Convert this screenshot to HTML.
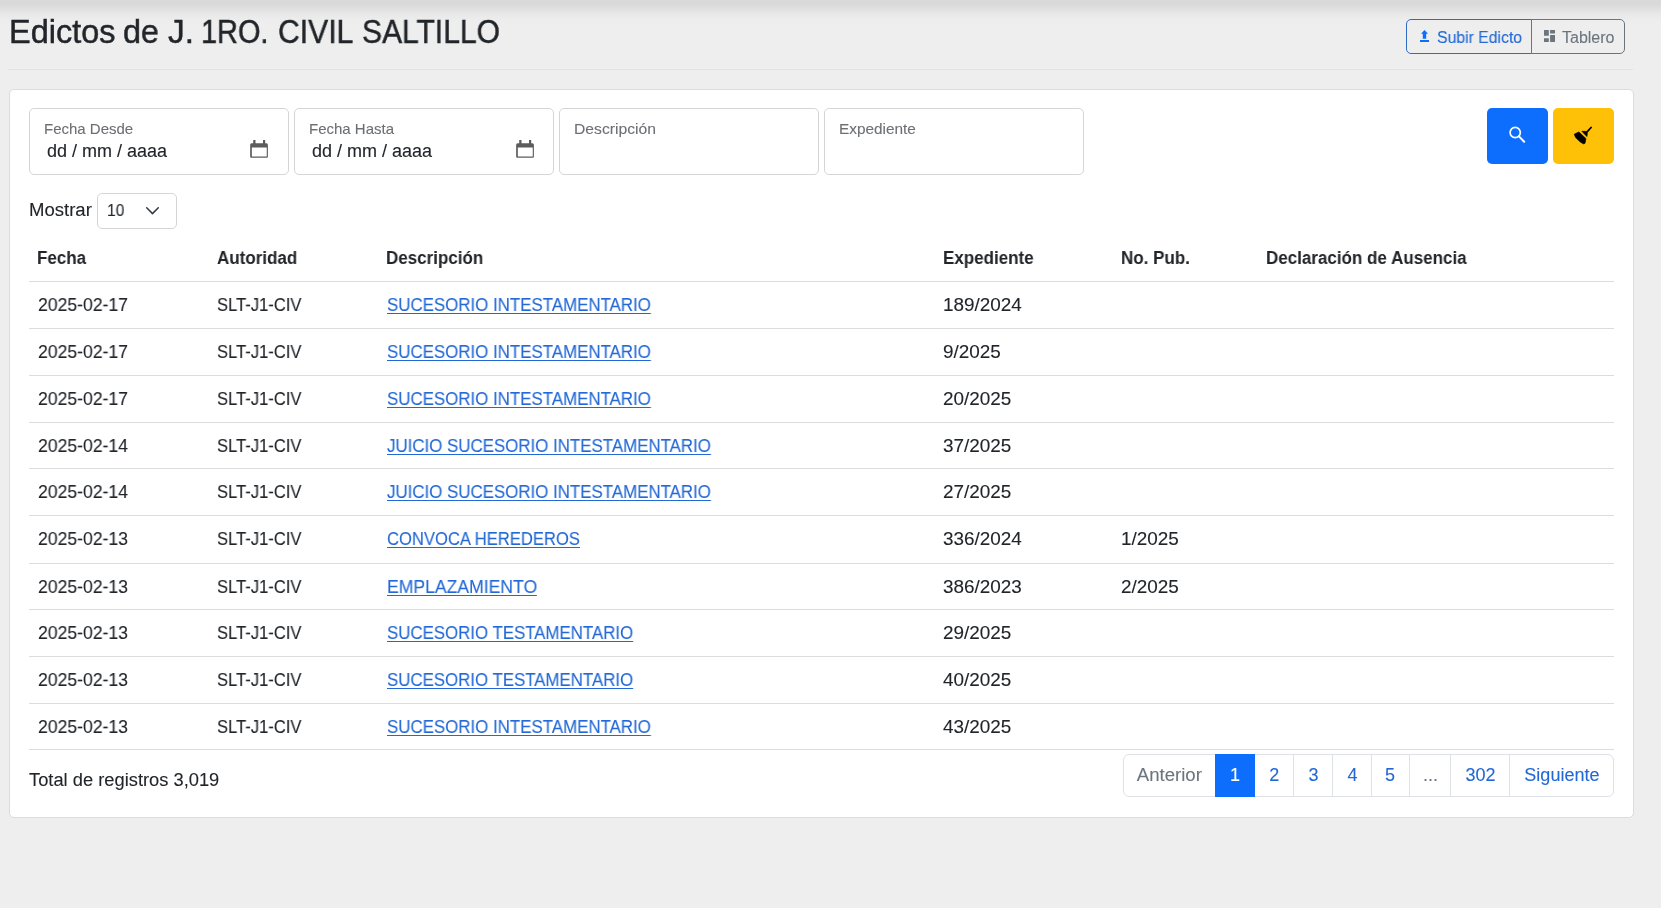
<!DOCTYPE html>
<html><head><meta charset="utf-8"><title>Edictos</title>
<style>
*{box-sizing:border-box;margin:0;padding:0}
html,body{width:1661px;height:908px;overflow:hidden}
body{position:relative;background:linear-gradient(#d9d9d9 0,#d9d9d9 4px,#e2e2e2 10px,#e8e8e8 14px,#ededed 20px,#eeeeee 24px) no-repeat,#eeeeee;font-family:"Liberation Sans",sans-serif;color:#212529}
.t{position:absolute;white-space:nowrap;line-height:1;transform-origin:0 0;-webkit-text-stroke:0.1px currentColor;will-change:transform}
.pc{text-align:center}
.abs,.ic{position:absolute}
.bg1{position:absolute;border:1px solid #2f6cc4;border-radius:5px 0 0 5px}
.bg2{position:absolute;border:1px solid #6c757d;border-radius:0 5px 5px 0}
.card{position:absolute;left:9px;top:89px;width:1625px;height:729px;background:#fff;border:1px solid #dcdcdc;border-radius:5px}
.inp{position:absolute;background:#fff;border:1px solid #d5d5d5;border-radius:5px}
.btnb{position:absolute;background:#0d6efd;border-radius:5px}
.btny{position:absolute;background:#ffc107;border-radius:5px}
.hl{position:absolute;left:29px;width:1585px;height:1px;background:#dcdcdc}
.pg{position:absolute;background:#fff;border:1px solid #dee2e6;border-radius:6px}
</style></head><body>
<div class="t" style="left:8.90px;top:16.49px;font-size:32.5px;font-weight:400;color:#212529;letter-spacing:0px;transform:scaleX(0.999);-webkit-text-stroke:0.45px #212529;">Edictos</div>
<div class="t" style="left:122.81px;top:16.49px;font-size:32.5px;font-weight:400;color:#212529;letter-spacing:0px;transform:scaleX(0.9941);-webkit-text-stroke:0.45px #212529;">de</div>
<div class="t" style="left:167.70px;top:16.49px;font-size:32.5px;font-weight:400;color:#212529;letter-spacing:0px;transform:scaleX(1.0261);-webkit-text-stroke:0.45px #212529;">J.</div>
<div class="t" style="left:201.32px;top:16.49px;font-size:32.5px;font-weight:400;color:#212529;letter-spacing:0px;transform:scaleX(0.8903);-webkit-text-stroke:0.45px #212529;">1RO.</div>
<div class="t" style="left:278.07px;top:16.49px;font-size:32.5px;font-weight:400;color:#212529;letter-spacing:0px;transform:scaleX(0.9263);-webkit-text-stroke:0.45px #212529;">CIVIL</div>
<div class="t" style="left:362.28px;top:16.49px;font-size:32.5px;font-weight:400;color:#212529;letter-spacing:0px;transform:scaleX(0.9245);-webkit-text-stroke:0.45px #212529;">SALTILLO</div>
<div class="bg1" style="left:1406px;top:19px;width:126px;height:35px"></div><div class="bg2" style="left:1531px;top:19px;width:94px;height:35px"></div><svg class="ic" style="left:1414px;top:26px" width="22" height="20" viewBox="0 0 22 20"><path fill="#0d6efd" d="M10.5 4L14 7.7H12.2V12.8H8.8V7.7H7Z M6 14.1H15V15.9H6Z"/></svg><div class="t" style="left:1437.00px;top:29.76px;font-size:16px;font-weight:400;color:#2268d6;letter-spacing:0px;transform:scaleX(0.986);">Subir Edicto</div>
<svg class="ic" style="left:1540px;top:26px" width="20" height="20" viewBox="0 0 20 20"><path fill="#6c757d" d="M4 4h4.8v5.8H4z M4 12.3h4.8v3.6H4z M10.1 4H15v3.6h-4.9z M10.1 9.1H15v6.8h-4.9z"/></svg><div class="t" style="left:1561.50px;top:29.76px;font-size:16px;font-weight:400;color:#6c757d;letter-spacing:0px;">Tablero</div>
<div class="abs" style="left:8px;top:68px;width:1625px;height:1px;background:#f1f1f1"></div><div class="abs" style="left:8px;top:69px;width:1625px;height:1px;background:#e1e1e1"></div><div class="card"></div><div class="inp" style="left:29px;top:108px;width:260px;height:67px"></div><div class="t" style="left:44.00px;top:121.20px;font-size:15px;font-weight:400;color:#6c6f73;letter-spacing:0px;">Fecha Desde</div>
<div class="t" style="left:47.00px;top:141.56px;font-size:18px;font-weight:400;color:#212529;letter-spacing:0px;">dd / mm / aaaa</div>
<svg class="ic" style="left:250px;top:140px" width="19" height="19" viewBox="0 0 19 19"><path fill="#5c5c5c" fill-rule="evenodd" d="M3.2 0h2.3v3.3H3.2z M13 0h2.2v3.3H13z M1.65 3.2h14.75a1.5 1.5 0 0 1 1.5 1.5v12.1a1 1 0 0 1-1 1H1.15a1 1 0 0 1-1-1V4.7a1.5 1.5 0 0 1 1.5-1.5z M1.85 7.5v9.1h14.9V7.5z"/></svg><div class="inp" style="left:293.5px;top:108px;width:260px;height:67px"></div><div class="t" style="left:308.50px;top:121.20px;font-size:15px;font-weight:400;color:#6c6f73;letter-spacing:0px;">Fecha Hasta</div>
<div class="t" style="left:311.50px;top:141.56px;font-size:18px;font-weight:400;color:#212529;letter-spacing:0px;">dd / mm / aaaa</div>
<svg class="ic" style="left:516px;top:140px" width="19" height="19" viewBox="0 0 19 19"><path fill="#5c5c5c" fill-rule="evenodd" d="M3.2 0h2.3v3.3H3.2z M13 0h2.2v3.3H13z M1.65 3.2h14.75a1.5 1.5 0 0 1 1.5 1.5v12.1a1 1 0 0 1-1 1H1.15a1 1 0 0 1-1-1V4.7a1.5 1.5 0 0 1 1.5-1.5z M1.85 7.5v9.1h14.9V7.5z"/></svg><div class="inp" style="left:559px;top:108px;width:260px;height:67px"></div><div class="t" style="left:574.00px;top:121.20px;font-size:15px;font-weight:400;color:#6c6f73;letter-spacing:0px;transform:scaleX(1.045);">Descripción</div>
<div class="inp" style="left:824px;top:108px;width:260px;height:67px"></div><div class="t" style="left:839.00px;top:121.20px;font-size:15px;font-weight:400;color:#6c6f73;letter-spacing:0px;transform:scaleX(1.024);">Expediente</div>
<div class="btnb" style="left:1487px;top:108px;width:61px;height:56px"></div><svg class="ic" style="left:1505px;top:122px" width="24" height="24" viewBox="0 0 24 24"><circle cx="10.2" cy="10.5" r="5.1" fill="none" stroke="#fff" stroke-width="1.7"/><path d="M14 14.4l5.2 5.4" stroke="#fff" stroke-width="2" stroke-linecap="round"/></svg><div class="btny" style="left:1553px;top:108px;width:61px;height:56px"></div><svg class="ic" style="left:1568px;top:120px" width="30" height="30" viewBox="0 0 30 30"><path fill="#000" stroke="#000" stroke-width="0.7" stroke-linejoin="round" d="M6.3 14.2L10.9 11.9L17.9 18.6L17.0 23.3L15.3 23.8L12.0 21.8L7.6 17.4Z M13.9 11.3L18.3 11.4L19.3 13.5L18.9 16.5Z"/><path d="M18.4 12.7L23.1 7.5" stroke="#000" stroke-width="1.8" stroke-linecap="round"/></svg><div class="t" style="left:29.00px;top:200.76px;font-size:18px;font-weight:400;color:#212529;letter-spacing:0px;transform:scaleX(1.03);">Mostrar</div>
<div class="inp" style="left:97px;top:193px;width:80px;height:36px"></div><div class="t" style="left:107.00px;top:202.66px;font-size:16px;font-weight:400;color:#212529;letter-spacing:0px;transform:scaleX(0.97);">10</div>
<svg class="ic" style="left:145px;top:205px" width="15" height="11" viewBox="0 0 15 11"><path d="M1.7 2.8l5.8 5.8 5.8-5.8" fill="none" stroke="#343a40" stroke-width="1.5" stroke-linecap="round" stroke-linejoin="round"/></svg><div class="t" style="left:37.00px;top:248.56px;font-size:18px;font-weight:700;color:#212529;letter-spacing:0px;transform:scaleX(0.944);-webkit-text-stroke:0;">Fecha</div>
<div class="t" style="left:216.50px;top:248.56px;font-size:18px;font-weight:700;color:#212529;letter-spacing:0px;transform:scaleX(0.944);-webkit-text-stroke:0;">Autoridad</div>
<div class="t" style="left:386.00px;top:248.56px;font-size:18px;font-weight:700;color:#212529;letter-spacing:0px;transform:scaleX(0.944);-webkit-text-stroke:0;">Descripción</div>
<div class="t" style="left:942.50px;top:248.56px;font-size:18px;font-weight:700;color:#212529;letter-spacing:0px;transform:scaleX(0.944);-webkit-text-stroke:0;">Expediente</div>
<div class="t" style="left:1120.50px;top:248.56px;font-size:18px;font-weight:700;color:#212529;letter-spacing:0px;transform:scaleX(0.944);-webkit-text-stroke:0;">No. Pub.</div>
<div class="t" style="left:1265.50px;top:248.56px;font-size:18px;font-weight:700;color:#212529;letter-spacing:0px;transform:scaleX(0.944);-webkit-text-stroke:0;">Declaración de Ausencia</div>
<div class="hl" style="top:281px"></div><div class="hl" style="top:328px"></div><div class="hl" style="top:375px"></div><div class="hl" style="top:422px"></div><div class="hl" style="top:468px"></div><div class="hl" style="top:515px"></div><div class="hl" style="top:563px"></div><div class="hl" style="top:609px"></div><div class="hl" style="top:656px"></div><div class="hl" style="top:703px"></div><div class="hl" style="top:749px"></div><div class="t" style="left:38.00px;top:296.26px;font-size:18px;font-weight:400;color:#212529;letter-spacing:0px;transform:scaleX(0.978);">2025-02-17</div>
<div class="t" style="left:217.00px;top:296.26px;font-size:18px;font-weight:400;color:#212529;letter-spacing:0px;transform:scaleX(0.92);">SLT-J1-CIV</div>
<div class="t" style="left:386.50px;top:296.26px;font-size:18px;font-weight:400;color:#2268d6;letter-spacing:0px;transform:scaleX(0.938);text-decoration:underline;text-underline-offset:2px;">SUCESORIO INTESTAMENTARIO</div>
<div class="t" style="left:943.00px;top:296.26px;font-size:18px;font-weight:400;color:#212529;letter-spacing:0px;transform:scaleX(1.05);">189/2024</div>
<div class="t" style="left:38.00px;top:343.26px;font-size:18px;font-weight:400;color:#212529;letter-spacing:0px;transform:scaleX(0.978);">2025-02-17</div>
<div class="t" style="left:217.00px;top:343.26px;font-size:18px;font-weight:400;color:#212529;letter-spacing:0px;transform:scaleX(0.92);">SLT-J1-CIV</div>
<div class="t" style="left:386.50px;top:343.26px;font-size:18px;font-weight:400;color:#2268d6;letter-spacing:0px;transform:scaleX(0.938);text-decoration:underline;text-underline-offset:2px;">SUCESORIO INTESTAMENTARIO</div>
<div class="t" style="left:943.00px;top:343.26px;font-size:18px;font-weight:400;color:#212529;letter-spacing:0px;transform:scaleX(1.05);">9/2025</div>
<div class="t" style="left:38.00px;top:390.26px;font-size:18px;font-weight:400;color:#212529;letter-spacing:0px;transform:scaleX(0.978);">2025-02-17</div>
<div class="t" style="left:217.00px;top:390.26px;font-size:18px;font-weight:400;color:#212529;letter-spacing:0px;transform:scaleX(0.92);">SLT-J1-CIV</div>
<div class="t" style="left:386.50px;top:390.26px;font-size:18px;font-weight:400;color:#2268d6;letter-spacing:0px;transform:scaleX(0.938);text-decoration:underline;text-underline-offset:2px;">SUCESORIO INTESTAMENTARIO</div>
<div class="t" style="left:943.00px;top:390.26px;font-size:18px;font-weight:400;color:#212529;letter-spacing:0px;transform:scaleX(1.05);">20/2025</div>
<div class="t" style="left:38.00px;top:437.26px;font-size:18px;font-weight:400;color:#212529;letter-spacing:0px;transform:scaleX(0.978);">2025-02-14</div>
<div class="t" style="left:217.00px;top:437.26px;font-size:18px;font-weight:400;color:#212529;letter-spacing:0px;transform:scaleX(0.92);">SLT-J1-CIV</div>
<div class="t" style="left:386.50px;top:437.26px;font-size:18px;font-weight:400;color:#2268d6;letter-spacing:0px;transform:scaleX(0.938);text-decoration:underline;text-underline-offset:2px;">JUICIO SUCESORIO INTESTAMENTARIO</div>
<div class="t" style="left:943.00px;top:437.26px;font-size:18px;font-weight:400;color:#212529;letter-spacing:0px;transform:scaleX(1.05);">37/2025</div>
<div class="t" style="left:38.00px;top:483.26px;font-size:18px;font-weight:400;color:#212529;letter-spacing:0px;transform:scaleX(0.978);">2025-02-14</div>
<div class="t" style="left:217.00px;top:483.26px;font-size:18px;font-weight:400;color:#212529;letter-spacing:0px;transform:scaleX(0.92);">SLT-J1-CIV</div>
<div class="t" style="left:386.50px;top:483.26px;font-size:18px;font-weight:400;color:#2268d6;letter-spacing:0px;transform:scaleX(0.938);text-decoration:underline;text-underline-offset:2px;">JUICIO SUCESORIO INTESTAMENTARIO</div>
<div class="t" style="left:943.00px;top:483.26px;font-size:18px;font-weight:400;color:#212529;letter-spacing:0px;transform:scaleX(1.05);">27/2025</div>
<div class="t" style="left:38.00px;top:530.26px;font-size:18px;font-weight:400;color:#212529;letter-spacing:0px;transform:scaleX(0.978);">2025-02-13</div>
<div class="t" style="left:217.00px;top:530.26px;font-size:18px;font-weight:400;color:#212529;letter-spacing:0px;transform:scaleX(0.92);">SLT-J1-CIV</div>
<div class="t" style="left:386.50px;top:530.26px;font-size:18px;font-weight:400;color:#2268d6;letter-spacing:0px;transform:scaleX(0.923);text-decoration:underline;text-underline-offset:2px;">CONVOCA HEREDEROS</div>
<div class="t" style="left:943.00px;top:530.26px;font-size:18px;font-weight:400;color:#212529;letter-spacing:0px;transform:scaleX(1.05);">336/2024</div>
<div class="t" style="left:1121.00px;top:530.26px;font-size:18px;font-weight:400;color:#212529;letter-spacing:0px;transform:scaleX(1.05);">1/2025</div>
<div class="t" style="left:38.00px;top:578.26px;font-size:18px;font-weight:400;color:#212529;letter-spacing:0px;transform:scaleX(0.978);">2025-02-13</div>
<div class="t" style="left:217.00px;top:578.26px;font-size:18px;font-weight:400;color:#212529;letter-spacing:0px;transform:scaleX(0.92);">SLT-J1-CIV</div>
<div class="t" style="left:386.50px;top:578.26px;font-size:18px;font-weight:400;color:#2268d6;letter-spacing:0px;transform:scaleX(0.977);text-decoration:underline;text-underline-offset:2px;">EMPLAZAMIENTO</div>
<div class="t" style="left:943.00px;top:578.26px;font-size:18px;font-weight:400;color:#212529;letter-spacing:0px;transform:scaleX(1.05);">386/2023</div>
<div class="t" style="left:1121.00px;top:578.26px;font-size:18px;font-weight:400;color:#212529;letter-spacing:0px;transform:scaleX(1.05);">2/2025</div>
<div class="t" style="left:38.00px;top:624.26px;font-size:18px;font-weight:400;color:#212529;letter-spacing:0px;transform:scaleX(0.978);">2025-02-13</div>
<div class="t" style="left:217.00px;top:624.26px;font-size:18px;font-weight:400;color:#212529;letter-spacing:0px;transform:scaleX(0.92);">SLT-J1-CIV</div>
<div class="t" style="left:386.50px;top:624.26px;font-size:18px;font-weight:400;color:#2268d6;letter-spacing:0px;transform:scaleX(0.936);text-decoration:underline;text-underline-offset:2px;">SUCESORIO TESTAMENTARIO</div>
<div class="t" style="left:943.00px;top:624.26px;font-size:18px;font-weight:400;color:#212529;letter-spacing:0px;transform:scaleX(1.05);">29/2025</div>
<div class="t" style="left:38.00px;top:671.26px;font-size:18px;font-weight:400;color:#212529;letter-spacing:0px;transform:scaleX(0.978);">2025-02-13</div>
<div class="t" style="left:217.00px;top:671.26px;font-size:18px;font-weight:400;color:#212529;letter-spacing:0px;transform:scaleX(0.92);">SLT-J1-CIV</div>
<div class="t" style="left:386.50px;top:671.26px;font-size:18px;font-weight:400;color:#2268d6;letter-spacing:0px;transform:scaleX(0.936);text-decoration:underline;text-underline-offset:2px;">SUCESORIO TESTAMENTARIO</div>
<div class="t" style="left:943.00px;top:671.26px;font-size:18px;font-weight:400;color:#212529;letter-spacing:0px;transform:scaleX(1.05);">40/2025</div>
<div class="t" style="left:38.00px;top:718.26px;font-size:18px;font-weight:400;color:#212529;letter-spacing:0px;transform:scaleX(0.978);">2025-02-13</div>
<div class="t" style="left:217.00px;top:718.26px;font-size:18px;font-weight:400;color:#212529;letter-spacing:0px;transform:scaleX(0.92);">SLT-J1-CIV</div>
<div class="t" style="left:386.50px;top:718.26px;font-size:18px;font-weight:400;color:#2268d6;letter-spacing:0px;transform:scaleX(0.938);text-decoration:underline;text-underline-offset:2px;">SUCESORIO INTESTAMENTARIO</div>
<div class="t" style="left:943.00px;top:718.26px;font-size:18px;font-weight:400;color:#212529;letter-spacing:0px;transform:scaleX(1.05);">43/2025</div>
<div class="t" style="left:29.00px;top:770.76px;font-size:18px;font-weight:400;color:#212529;letter-spacing:0px;transform:scaleX(1.017);">Total de registros 3,019</div>
<div class="pg" style="left:1122.5px;top:753.6px;width:491.0px;height:43px"></div><div class="abs" style="left:1254.4px;top:754px;width:1px;height:42px;background:#dee2e6"></div><div class="abs" style="left:1293.1px;top:754px;width:1px;height:42px;background:#dee2e6"></div><div class="abs" style="left:1332.1px;top:754px;width:1px;height:42px;background:#dee2e6"></div><div class="abs" style="left:1370.9px;top:754px;width:1px;height:42px;background:#dee2e6"></div><div class="abs" style="left:1409.0px;top:754px;width:1px;height:42px;background:#dee2e6"></div><div class="abs" style="left:1450.0px;top:754px;width:1px;height:42px;background:#dee2e6"></div><div class="abs" style="left:1509.2px;top:754px;width:1px;height:42px;background:#dee2e6"></div><div class="abs" style="left:1215.1px;top:753.6px;width:39.8px;height:43px;background:#0d6efd"></div><div class="t pc" style="left:1122.5px;width:92.6px;top:765.76px;font-size:18px;color:#6c757d;transform:scaleX(1.033);transform-origin:50% 0;">Anterior</div>
<div class="t pc" style="left:1215.1px;width:39.8px;top:765.76px;font-size:18px;color:#fff;">1</div>
<div class="t pc" style="left:1254.9px;width:38.7px;top:765.76px;font-size:18px;color:#2268d6;">2</div>
<div class="t pc" style="left:1293.6px;width:39.0px;top:765.76px;font-size:18px;color:#2268d6;">3</div>
<div class="t pc" style="left:1332.6px;width:38.8px;top:765.76px;font-size:18px;color:#2268d6;">4</div>
<div class="t pc" style="left:1371.4px;width:38.1px;top:765.76px;font-size:18px;color:#2268d6;">5</div>
<div class="t pc" style="left:1409.5px;width:41.0px;top:765.76px;font-size:18px;color:#6c757d;">...</div>
<div class="t pc" style="left:1450.5px;width:59.2px;top:765.76px;font-size:18px;color:#2268d6;">302</div>
<div class="t pc" style="left:1509.7px;width:103.8px;top:765.76px;font-size:18px;color:#2268d6;">Siguiente</div>

</body></html>
